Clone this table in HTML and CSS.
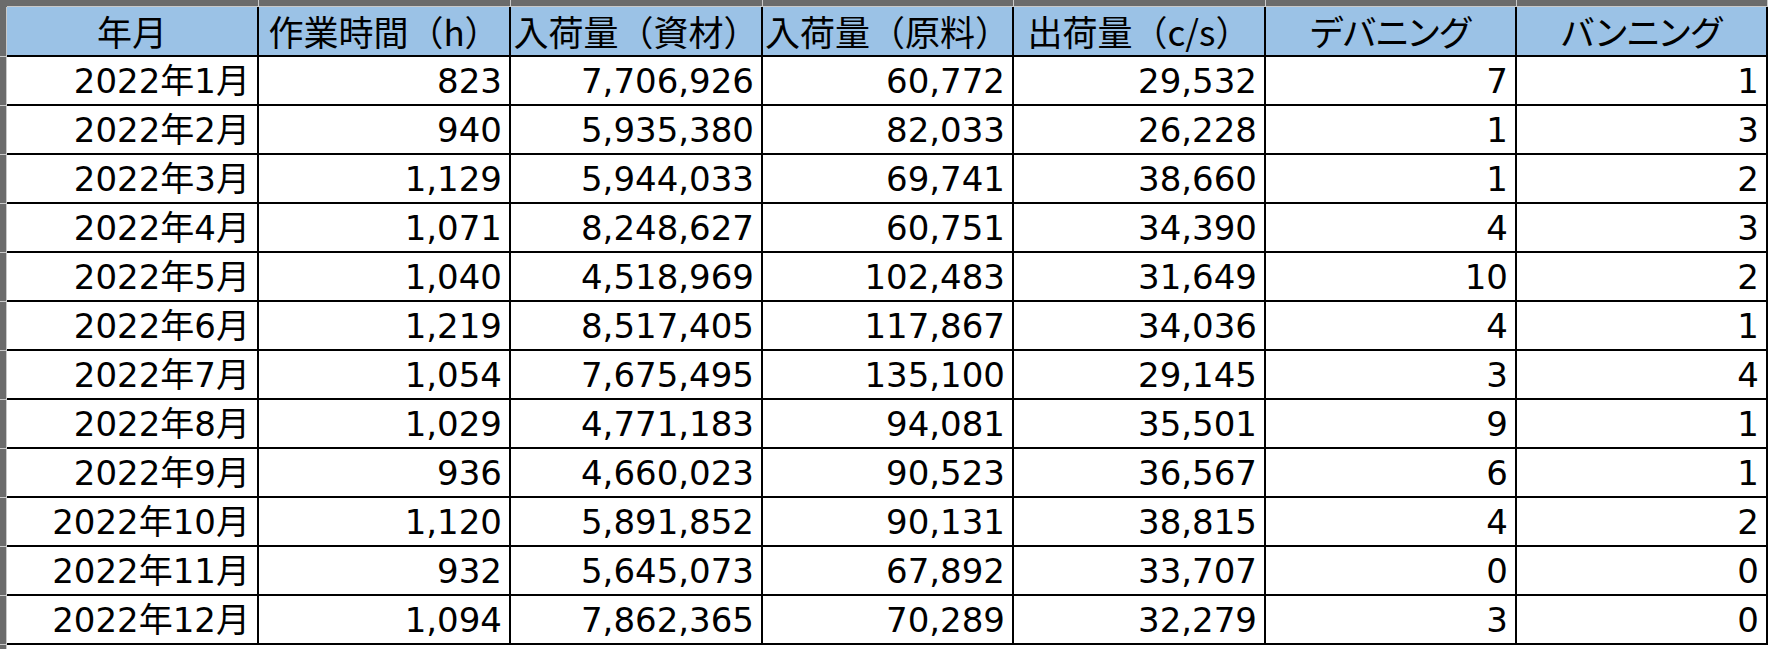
FILE: index.html
```html
<!DOCTYPE html>
<html lang="ja">
<head>
<meta charset="utf-8">
<title>2022年 月別実績</title>
<link rel="stylesheet" href="styles.css">
</head>
<body>
<div class="sheet">
  <div class="corner"></div>
  <div class="colbar">
    <span></span><span></span><span></span><span></span><span></span><span></span><span></span>
  </div>
  <div class="rowbar">
    <span></span><span></span><span></span><span></span><span></span><span></span><span></span><span></span><span></span><span></span><span></span><span></span><span></span>
  </div>
  <div class="grid">
    <div class="hd">年月</div>
    <div class="hd">作業時間（h）</div>
    <div class="hd">入荷量（資材）</div>
    <div class="hd">入荷量（原料）</div>
    <div class="hd">出荷量（c/s）</div>
    <div class="hd kana">デバニング</div>
    <div class="hd kana">バンニング</div>

    <div class="c">2022年1月</div><div class="c">823</div><div class="c">7,706,926</div><div class="c">60,772</div><div class="c">29,532</div><div class="c">7</div><div class="c">1</div>
    <div class="c">2022年2月</div><div class="c">940</div><div class="c">5,935,380</div><div class="c">82,033</div><div class="c">26,228</div><div class="c">1</div><div class="c">3</div>
    <div class="c">2022年3月</div><div class="c">1,129</div><div class="c">5,944,033</div><div class="c">69,741</div><div class="c">38,660</div><div class="c">1</div><div class="c">2</div>
    <div class="c">2022年4月</div><div class="c">1,071</div><div class="c">8,248,627</div><div class="c">60,751</div><div class="c">34,390</div><div class="c">4</div><div class="c">3</div>
    <div class="c">2022年5月</div><div class="c">1,040</div><div class="c">4,518,969</div><div class="c">102,483</div><div class="c">31,649</div><div class="c">10</div><div class="c">2</div>
    <div class="c">2022年6月</div><div class="c">1,219</div><div class="c">8,517,405</div><div class="c">117,867</div><div class="c">34,036</div><div class="c">4</div><div class="c">1</div>
    <div class="c">2022年7月</div><div class="c">1,054</div><div class="c">7,675,495</div><div class="c">135,100</div><div class="c">29,145</div><div class="c">3</div><div class="c">4</div>
    <div class="c">2022年8月</div><div class="c">1,029</div><div class="c">4,771,183</div><div class="c">94,081</div><div class="c">35,501</div><div class="c">9</div><div class="c">1</div>
    <div class="c">2022年9月</div><div class="c">936</div><div class="c">4,660,023</div><div class="c">90,523</div><div class="c">36,567</div><div class="c">6</div><div class="c">1</div>
    <div class="c">2022年10月</div><div class="c">1,120</div><div class="c">5,891,852</div><div class="c">90,131</div><div class="c">38,815</div><div class="c">4</div><div class="c">2</div>
    <div class="c">2022年11月</div><div class="c">932</div><div class="c">5,645,073</div><div class="c">67,892</div><div class="c">33,707</div><div class="c">0</div><div class="c">0</div>
    <div class="c">2022年12月</div><div class="c">1,094</div><div class="c">7,862,365</div><div class="c">70,289</div><div class="c">32,279</div><div class="c">3</div><div class="c">0</div>
  </div>
</div>
</body>
</html>
```
FILE: styles.css
```css
html, body {
  margin: 0;
  padding: 0;
  background: #ffffff;
}

.sheet {
  display: grid;
  grid-template-columns: 7px 1761px;
  grid-template-rows: 7px 638px 4px;
  width: 1771px;
  height: 649px;
  overflow: hidden;
}

.corner {
  background: #6b6b6b;
}

.colbar {
  display: grid;
  grid-template-columns: 250px 250px 250px 249px 250px 249px 249px 2px;
  column-gap: 2px;
  background: #6b6b6b;
  border-bottom: 1px solid #c9c9c9;
  box-sizing: border-box;
}

.colbar span {
  border-right: 1px solid #c9c9c9;
  margin-right: -2px;
}

.rowbar {
  grid-row: 2 / 4;
  display: grid;
  grid-template-rows: 48px repeat(12, 47px) 4px;
  row-gap: 2px;
  background: #6b6b6b;
  border-right: 1px solid #c9c9c9;
  box-sizing: border-box;
}

.rowbar span {
  border-bottom: 1px solid #c9c9c9;
  margin-bottom: -2px;
}

.grid {
  display: grid;
  grid-template-columns: 250px 250px 250px 249px 250px 249px 249px;
  grid-template-rows: 48px repeat(12, 47px);
  column-gap: 2px;
  row-gap: 2px;
  background: #000000;
  padding: 0 2px 2px 0;
  width: 1761px;
  height: 638px;
  box-sizing: border-box;
}

.hd {
  background: #9bc2e6;
  display: flex;
  align-items: center;
  justify-content: center;
  font-family: "Noto Sans CJK JP", sans-serif;
  font-size: 35px;
  color: #000000;
  white-space: nowrap;
  line-height: 44px;
  min-width: 0;
}

.hd.kana {
  font-feature-settings: "palt";
}

.c {
  background: #ffffff;
  display: flex;
  align-items: center;
  justify-content: flex-end;
  padding-right: 7px;
  font-family: "DejaVu Sans", "Noto Sans CJK JP", sans-serif;
  font-size: 34px;
  line-height: 42px;
  color: #000000;
  white-space: nowrap;
}
```
